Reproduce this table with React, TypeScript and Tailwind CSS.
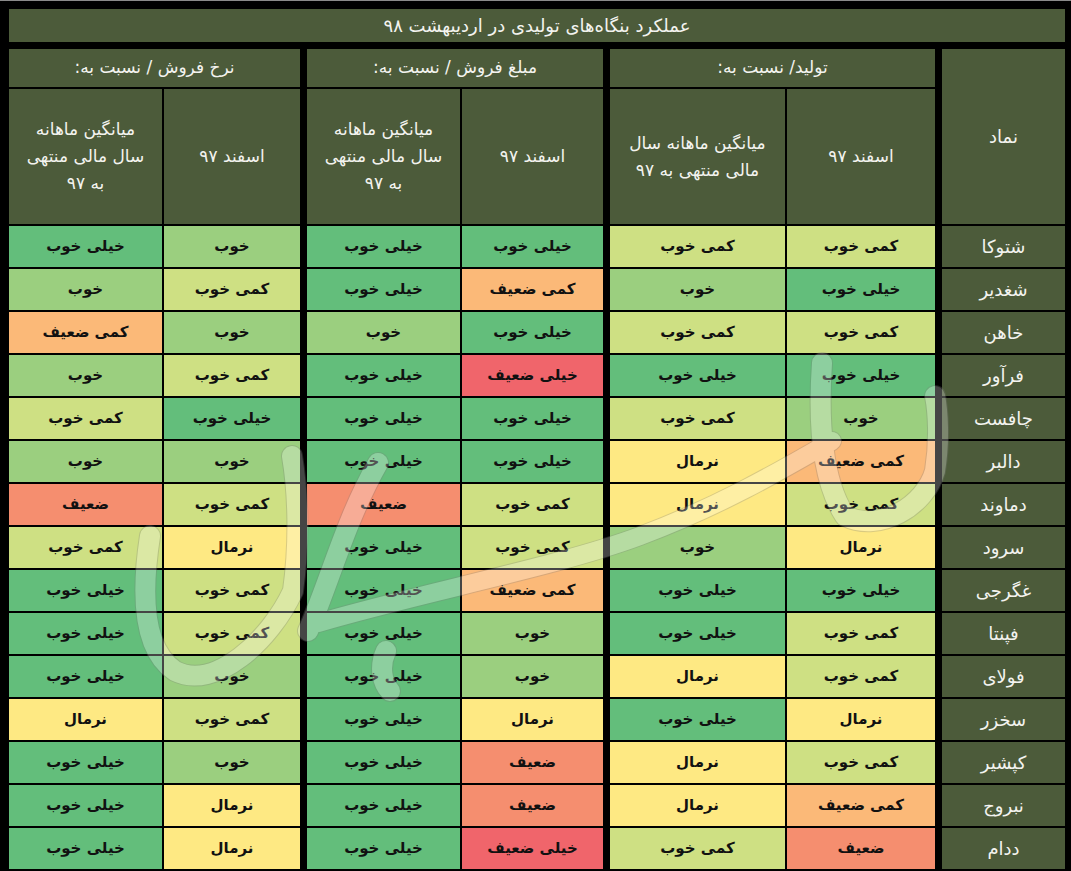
import React from 'react';

const COLORS: Record<string, string> = {
  'خیلی خوب': 'bg-[#63be7b]',
  'خوب': 'bg-[#9bcf7f]',
  'کمی خوب': 'bg-[#cee083]',
  'نرمال': 'bg-[#fee983]',
  'کمی ضعیف': 'bg-[#fbb978]',
  'ضعیف': 'bg-[#f58e6f]',
  'خیلی ضعیف': 'bg-[#f0656b]',
};

// [name, تولید اسفند, تولید میانگین, مبلغ اسفند, مبلغ میانگین, نرخ اسفند, نرخ میانگین]
const ROWS: string[][] = [
  ['شتوکا', 'کمی خوب', 'کمی خوب', 'خیلی خوب', 'خیلی خوب', 'خوب', 'خیلی خوب'],
  ['شغدیر', 'خیلی خوب', 'خوب', 'کمی ضعیف', 'خیلی خوب', 'کمی خوب', 'خوب'],
  ['خاهن', 'کمی خوب', 'کمی خوب', 'خیلی خوب', 'خوب', 'خوب', 'کمی ضعیف'],
  ['فرآور', 'خیلی خوب', 'خیلی خوب', 'خیلی ضعیف', 'خیلی خوب', 'کمی خوب', 'خوب'],
  ['چافست', 'خوب', 'کمی خوب', 'خیلی خوب', 'خیلی خوب', 'خیلی خوب', 'کمی خوب'],
  ['دالبر', 'کمی ضعیف', 'نرمال', 'خیلی خوب', 'خیلی خوب', 'خوب', 'خوب'],
  ['دماوند', 'کمی خوب', 'نرمال', 'کمی خوب', 'ضعیف', 'کمی خوب', 'ضعیف'],
  ['سرود', 'نرمال', 'خوب', 'کمی خوب', 'خیلی خوب', 'نرمال', 'کمی خوب'],
  ['غگرجی', 'خیلی خوب', 'خیلی خوب', 'کمی ضعیف', 'خیلی خوب', 'کمی خوب', 'خیلی خوب'],
  ['فپنتا', 'کمی خوب', 'خیلی خوب', 'خوب', 'خیلی خوب', 'کمی خوب', 'خیلی خوب'],
  ['فولای', 'کمی خوب', 'نرمال', 'خوب', 'خیلی خوب', 'خوب', 'خیلی خوب'],
  ['سخزر', 'نرمال', 'خیلی خوب', 'نرمال', 'خیلی خوب', 'کمی خوب', 'نرمال'],
  ['کپشیر', 'کمی خوب', 'نرمال', 'ضعیف', 'خیلی خوب', 'خوب', 'خیلی خوب'],
  ['نبروج', 'کمی ضعیف', 'نرمال', 'ضعیف', 'خیلی خوب', 'نرمال', 'خیلی خوب'],
  ['ددام', 'ضعیف', 'کمی خوب', 'خیلی ضعیف', 'خیلی خوب', 'نرمال', 'خیلی خوب'],
];

const HDR = 'bg-[#4c5b3a] text-[#f3f3ef]';

function Cell({ w, v }: { w: string; v: string }) {
  return (
    <div
      className={`${w} h-[41px] ${COLORS[v]} flex items-center justify-center text-[15px] font-bold text-[#111]`}
    >
      {v}
    </div>
  );
}

function SubHead({ w, lines }: { w: string; lines: string[] }) {
  return (
    <div
      className={`${w} h-[135px] ${HDR} flex flex-col items-center justify-center text-[17px] leading-[27px] text-center`}
    >
      {lines.map((l, i) => (
        <div key={i}>{l}</div>
      ))}
    </div>
  );
}

function Group({
  title,
  wr,
  wl,
  subR,
  subL,
  idx,
}: {
  title: string;
  wr: string;
  wl: string;
  subR: string[];
  subL: string[];
  idx: number;
}) {
  return (
    <div className="flex flex-col gap-[2px]">
      <div className={`h-[38px] ${HDR} flex items-center justify-center text-[17px]`}>{title}</div>
      <div className="flex gap-[2px]">
        <SubHead w={wr} lines={subR} />
        <SubHead w={wl} lines={subL} />
      </div>
      {ROWS.map((r, i) => (
        <div key={i} className="flex gap-[2px]">
          <Cell w={wr} v={r[idx]} />
          <Cell w={wl} v={r[idx + 1]} />
        </div>
      ))}
    </div>
  );
}

function Watermark() {
  const paths = [
    'M150 535 C 140 600, 145 650, 175 670 C 215 690, 270 640, 293 590 C 300 540, 298 490, 292 455',
    'M308 630 C 330 580, 345 520, 378 462',
    'M318 622 C 420 592, 560 565, 640 535 C 720 505, 780 470, 832 440',
    'M822 362 C 818 420, 822 480, 845 515 C 880 532, 925 505, 935 470 C 940 440, 938 410, 935 395',
    'M386 650 C 379 665, 382 682, 390 690',
  ];
  return (
    <svg
      className="absolute inset-0 pointer-events-none"
      width="1071"
      height="871"
      viewBox="0 0 1071 871"
    >
      <g opacity="0.27" fill="none" strokeLinecap="round" strokeLinejoin="round">
        {paths.map((d, i) => (
          <path key={'o' + i} d={d} stroke="#7a7a7a" strokeWidth={i === 2 ? 20 : 22} />
        ))}
        {paths.map((d, i) => (
          <path key={'i' + i} d={d} stroke="#ffffff" strokeWidth={i === 2 ? 18 : 20} />
        ))}
      </g>
    </svg>
  );
}

export default function App() {
  return (
    <div
      dir="rtl"
      className="relative w-[1071px] h-[871px] overflow-hidden bg-black border-t border-[#8a8a8a] pt-[8px] pr-[6px] pl-[9px] font-['DejaVu_Sans',sans-serif]"
    >
      <div className={`h-[33px] ${HDR} flex items-center justify-center text-[18px]`}>
        عملکرد بنگاه‌های تولیدی در اردیبهشت ۹۸
      </div>
      <div className="mt-[7px] flex gap-[7px]">
        <div className="flex flex-col gap-[2px]">
          <div className={`w-[123px] h-[175px] ${HDR} flex items-center justify-center text-[18px]`}>
            نماد
          </div>
          {ROWS.map((r, i) => (
            <div
              key={i}
              className={`w-[123px] h-[41px] ${HDR} flex items-center justify-center text-[18px]`}
            >
              {r[0]}
            </div>
          ))}
        </div>
        <Group
          title="تولید/ نسبت به:"
          wr="w-[148px]"
          wl="w-[175px]"
          subR={['اسفند ۹۷']}
          subL={['میانگین ماهانه سال', 'مالی منتهی به ۹۷']}
          idx={1}
        />
        <Group
          title="مبلغ فروش / نسبت به:"
          wr="w-[141px]"
          wl="w-[153px]"
          subR={['اسفند ۹۷']}
          subL={['میانگین ماهانه', 'سال مالی منتهی', 'به ۹۷']}
          idx={3}
        />
        <Group
          title="نرخ فروش / نسبت به:"
          wr="w-[136px]"
          wl="w-[153px]"
          subR={['اسفند ۹۷']}
          subL={['میانگین ماهانه', 'سال مالی منتهی', 'به ۹۷']}
          idx={5}
        />
      </div>
      <Watermark />
    </div>
  );
}
